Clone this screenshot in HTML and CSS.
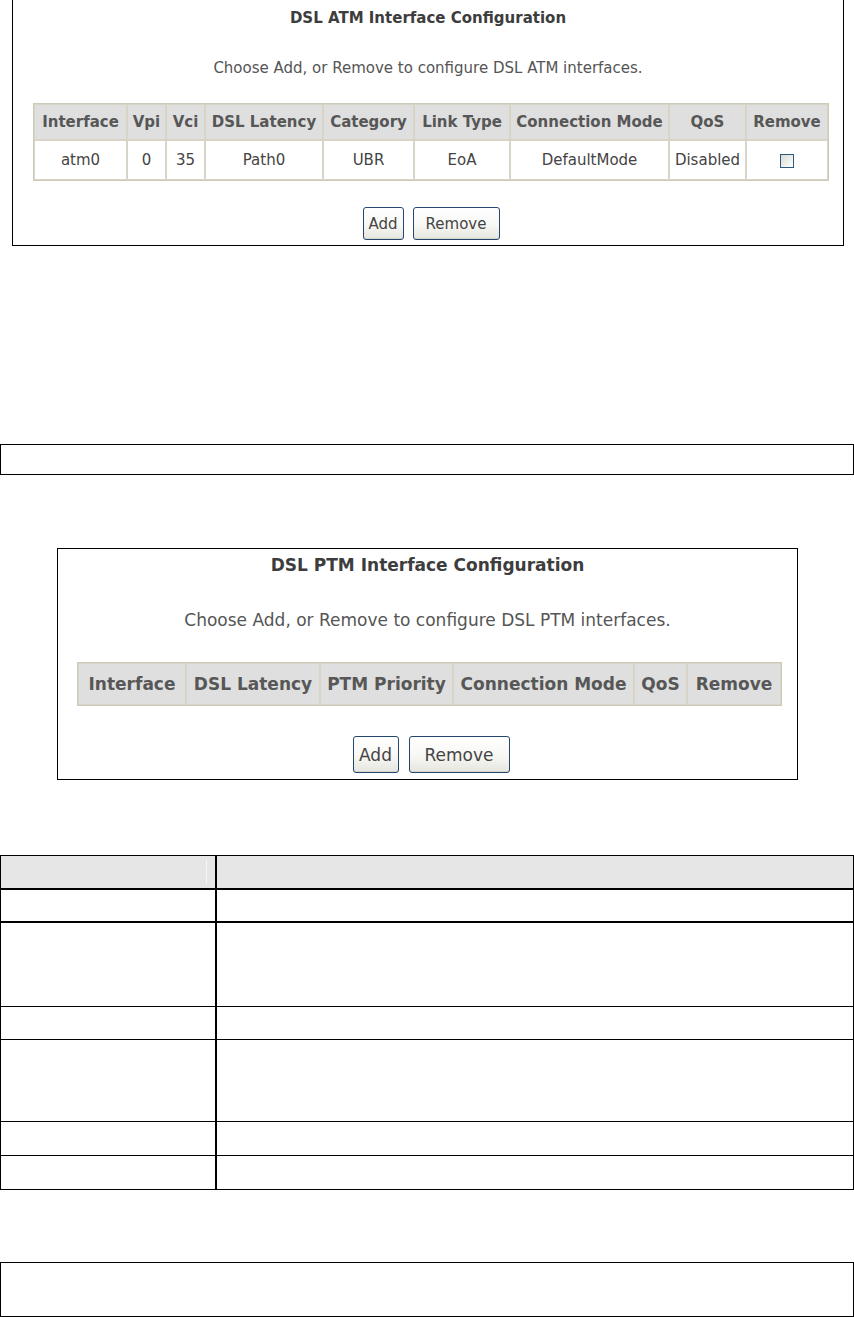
FILE: index.html
```html
<!DOCTYPE html>
<html lang="en">
<head>
<meta charset="utf-8">
<title>DSL Interface Configuration</title>
<link rel="stylesheet" href="styles.css">
</head>
<body>
  <section class="panel panel-atm">
    <h1 class="panel-title">DSL ATM Interface Configuration</h1>
    <p class="panel-sub">Choose Add, or Remove to configure DSL ATM interfaces.</p>
    <table class="grid grid-atm">
      <thead>
        <tr>
          <th class="a-iface">Interface</th>
          <th class="a-vpi">Vpi</th>
          <th class="a-vci">Vci</th>
          <th class="a-lat">DSL Latency</th>
          <th class="a-cat">Category</th>
          <th class="a-link">Link Type</th>
          <th class="a-mode">Connection Mode</th>
          <th class="a-qos">QoS</th>
          <th class="a-rem">Remove</th>
        </tr>
      </thead>
      <tbody>
        <tr>
          <td>atm0</td>
          <td>0</td>
          <td>35</td>
          <td>Path0</td>
          <td>UBR</td>
          <td>EoA</td>
          <td>DefaultMode</td>
          <td>Disabled</td>
          <td><span class="chk"></span></td>
        </tr>
      </tbody>
    </table>
    <div class="btnrow">
      <button class="btn btn-add" type="button">Add</button>
      <button class="btn btn-remove" type="button">Remove</button>
    </div>
  </section>

  <div class="strip"></div>

  <section class="panel panel-ptm">
    <h1 class="panel-title">DSL PTM Interface Configuration</h1>
    <p class="panel-sub">Choose Add, or Remove to configure DSL PTM interfaces.</p>
    <table class="grid grid-ptm">
      <thead>
        <tr>
          <th class="p-iface">Interface</th>
          <th class="p-lat">DSL Latency</th>
          <th class="p-pri">PTM Priority</th>
          <th class="p-mode">Connection Mode</th>
          <th class="p-qos">QoS</th>
          <th class="p-rem">Remove</th>
        </tr>
      </thead>
    </table>
    <div class="btnrow">
      <button class="btn btn-add" type="button">Add</button>
      <button class="btn btn-remove" type="button">Remove</button>
    </div>
  </section>

  <div class="desc">
    <div class="cell head first"><div class="head-mark"></div></div>
    <div class="cell head"></div>
    <div class="cell first thick"></div>
    <div class="cell thick"></div>
    <div class="cell first thin"></div>
    <div class="cell thin"></div>
    <div class="cell first thin"></div>
    <div class="cell thin"></div>
    <div class="cell first thin"></div>
    <div class="cell thin"></div>
    <div class="cell first thin"></div>
    <div class="cell thin"></div>
    <div class="cell first"></div>
    <div class="cell"></div>
  </div>

  <div class="note"></div>
</body>
</html>
```
FILE: styles.css
```css
* { box-sizing: border-box; }

body {
  margin: 0;
  background: #ffffff;
  font-family: "DejaVu Sans", "Liberation Sans", sans-serif;
  color: #444444;
}

/* ---------- configuration panels ---------- */
.panel {
  border: 1px solid #000000;
  background: #ffffff;
}

.panel-atm {
  width: 832px;
  margin: -1px 0 0 12px;
  padding: 8px 0 5px;
}

.panel-ptm {
  width: 741px;
  margin: 73px 0 0 57px;
  padding: 5px 0 6px;
}

.panel-title {
  margin: 0;
  text-align: center;
  font-weight: bold;
  color: #3d3d3d;
}

.panel-sub {
  margin: 0;
  text-align: center;
  font-weight: normal;
  color: #555555;
}

.panel-atm .panel-title { font-size: 15px; line-height: 20px; }
.panel-atm .panel-sub { font-size: 15px; line-height: 20px; margin-top: 30px; }

.panel-ptm .panel-title { font-size: 17px; line-height: 22px; }
.panel-ptm .panel-sub { font-size: 17px; line-height: 22px; margin-top: 33px; }

/* ---------- data grids ---------- */
.grid {
  table-layout: fixed;
  border-collapse: separate;
  border-spacing: 0;
  border: 1px solid #cdc9b9;
}

.grid th,
.grid td {
  padding: 0;
  border: 1px solid #d8d5c7;
  text-align: center;
  vertical-align: middle;
  white-space: nowrap;
  overflow: hidden;
}

.grid th {
  background: #dfdfdf;
  color: #575757;
  font-weight: bold;
}

.grid td {
  background: #ffffff;
  color: #444444;
  font-weight: normal;
}

.grid-atm {
  width: 796px;
  margin: 25px 0 0 20px;
  font-size: 15px;
}
.grid-atm th { height: 36px; }
.grid-atm td { height: 40px; }

.a-iface { width: 93px; }
.a-vpi   { width: 39px; }
.a-vci   { width: 39px; }
.a-lat   { width: 118px; }
.a-cat   { width: 91px; }
.a-link  { width: 96px; }
.a-mode  { width: 159px; }
.a-qos   { width: 77px; }
.a-rem   { width: 82px; }

.grid-ptm {
  width: 705px;
  margin: 31px 0 0 19px;
  font-size: 17px;
}
.grid-ptm th { height: 42px; }

.p-iface { width: 108px; }
.p-lat   { width: 134px; }
.p-pri   { width: 133px; }
.p-mode  { width: 181px; }
.p-qos   { width: 53px; }
.p-rem   { width: 94px; }

.chk {
  display: inline-block;
  width: 14px;
  height: 14px;
  vertical-align: middle;
  border: 1px solid #2e5a82;
  background: linear-gradient(135deg, #d9d9d2 0%, #f1f1ec 60%, #ffffff 100%);
}

/* ---------- buttons ---------- */
.btnrow {
  display: flex;
  justify-content: center;
}

.panel-atm .btnrow { margin-top: 26px; padding-left: 6px; gap: 9px; }
.panel-ptm .btnrow { margin-top: 30px; padding-left: 7px; gap: 10px; }

.btn {
  margin: 0;
  padding: 0;
  font-family: "DejaVu Sans", "Liberation Sans", sans-serif;
  color: #444444;
  border: 1px solid #23476f;
  border-radius: 3px;
  background: linear-gradient(#ffffff 0%, #f7f7f4 55%, #e6e5de 100%);
  box-shadow: inset 0 -1px 0 #d6d4cb;
}

.panel-atm .btn { height: 33px; font-size: 15px; }
.panel-atm .btn-add { width: 41px; }
.panel-atm .btn-remove { width: 87px; }

.panel-ptm .btn { height: 37px; font-size: 17px; }
.panel-ptm .btn-add { width: 46px; }
.panel-ptm .btn-remove { width: 101px; }

/* ---------- plain boxes ---------- */
.strip {
  width: 854px;
  height: 31px;
  margin-top: 198px;
  border: 1px solid #000000;
}

.desc {
  display: grid;
  width: 854px;
  margin-top: 75px;
  grid-template-columns: 216px 1fr;
  grid-template-rows: 34px 33px 84px 33px 82px 34px 33px;
  border: 1px solid #000000;
}

.cell { background: #ffffff; }
.cell.first { border-right: 2px solid #000000; }
.cell.head { background: #e6e6e6; border-bottom: 2px solid #000000; }
.cell.thick { border-bottom: 2px solid #000000; }
.cell.thin { border-bottom: 1px solid #000000; }

.head-mark {
  width: 206px;
  height: 24px;
  margin-top: 4px;
  border-right: 1px solid #f7f7f7;
}

.note {
  width: 854px;
  height: 55px;
  margin-top: 72px;
  border: 1px solid #000000;
}
```
